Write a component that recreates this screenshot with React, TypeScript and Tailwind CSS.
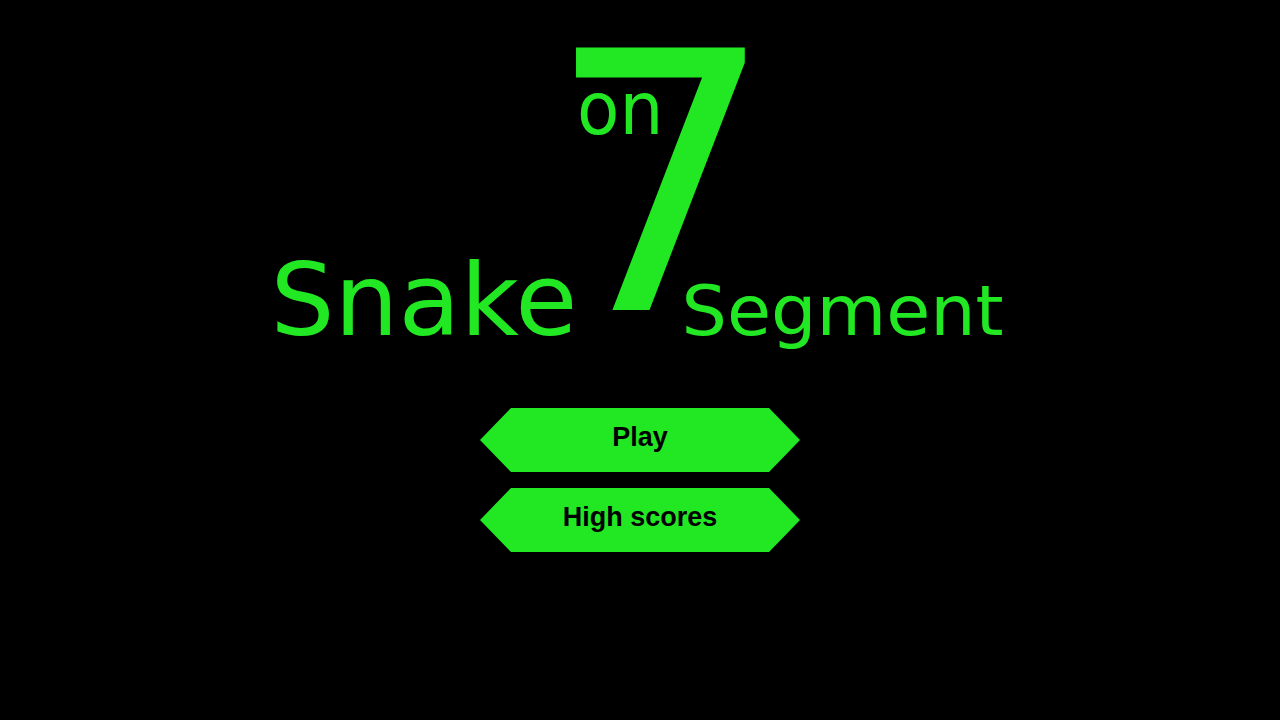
import React from 'react';

const GREEN = '#22e824';

// logo drawn as svg text, each word placed by hand
function Logo() {
  return (
    <svg width="760" height="330" viewBox="0 0 760 330" className="block">
      <g fill={GREEN} style={{ fontFamily: '"DejaVu Sans", sans-serif' }}>
        <text transform="translate(10.5 305) scale(1.02 1)" fontSize="99">Snake</text>
        <text x="286.5" y="280" fontSize="360">7</text>
        <text transform="translate(317 104) scale(0.95 1)" fontSize="73">on</text>
        <text transform="translate(421.5 305) scale(1.023 1)" fontSize="70">Segment</text>
      </g>
    </svg>
  );
}

function HexButton({ label }: { label: string }) {
  return (
    <button
      className="flex h-16 w-80 items-center justify-center bg-[#22e824] pb-[6px] text-[27px] font-bold text-black [clip-path:polygon(0_50%,31px_0,calc(100%-31px)_0,100%_50%,calc(100%-31px)_100%,31px_100%)]"
      style={{ fontFamily: '"Liberation Sans", Arial, sans-serif' }}
    >
      {label}
    </button>
  );
}

export default function App() {
  return (
    <div className="flex min-h-screen flex-col items-center bg-black pt-[30px]">
      <Logo />
      <div className="mt-12 flex flex-col gap-4">
        <HexButton label="Play" />
        <HexButton label="High scores" />
      </div>
    </div>
  );
}
